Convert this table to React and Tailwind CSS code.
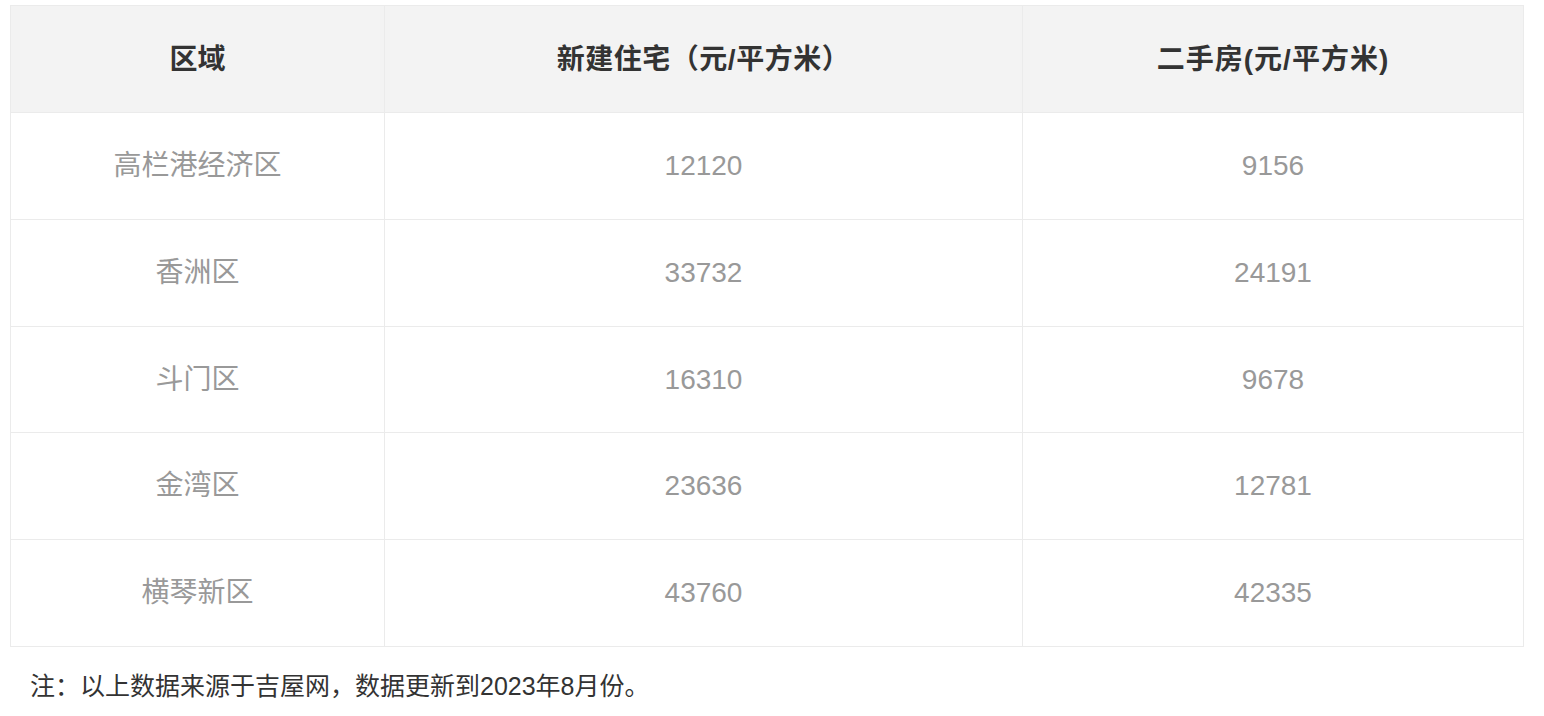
import React from "react";

const rows = [
  ["高栏港经济区", "12120", "9156"],
  ["香洲区", "33732", "24191"],
  ["斗门区", "16310", "9678"],
  ["金湾区", "23636", "12781"],
  ["横琴新区", "43760", "42335"],
];

export default function App() {
  return (
    <div
      className="bg-white w-[1544px] h-[716px] pt-[5px] pl-[10px]"
      style={{ fontFamily: '"Liberation Sans", "Noto Sans CJK SC", sans-serif' }}
    >
      <table className="border-collapse w-[1513px] table-fixed">
        <colgroup>
          <col className="w-[374px]" />
          <col className="w-[638px]" />
          <col className="w-[501px]" />
        </colgroup>
        <thead>
          <tr className="bg-[#f3f3f3] h-[107px]">
            <th className="border border-[#ebebeb] pt-[2px] text-[28px] font-bold text-[#333333]">区域</th>
            <th className="border border-[#ebebeb] pt-[2px] text-[28px] font-bold text-[#333333] tracking-[0.5px]">新建住宅（元/平方米）</th>
            <th className="border border-[#ebebeb] pt-[2px] text-[28px] font-bold text-[#333333] tracking-[1px]">二手房(元/平方米)</th>
          </tr>
        </thead>
        <tbody>
          {rows.map((r, idx) => (
            <tr key={r[0]} className={idx === 2 ? "h-[106px]" : "h-[107px]"}>
              {r.map((c, i) => (
                <td key={i} className="border border-[#ebebeb] text-center text-[28px] text-[#999999]">
                  {c}
                </td>
              ))}
            </tr>
          ))}
        </tbody>
      </table>
      <p className="mt-[24px] pl-[20px] text-[25px] leading-[30px] text-[#333333]">
        注：以上数据来源于吉屋网，数据更新到2023年8月份。
      </p>
    </div>
  );
}
